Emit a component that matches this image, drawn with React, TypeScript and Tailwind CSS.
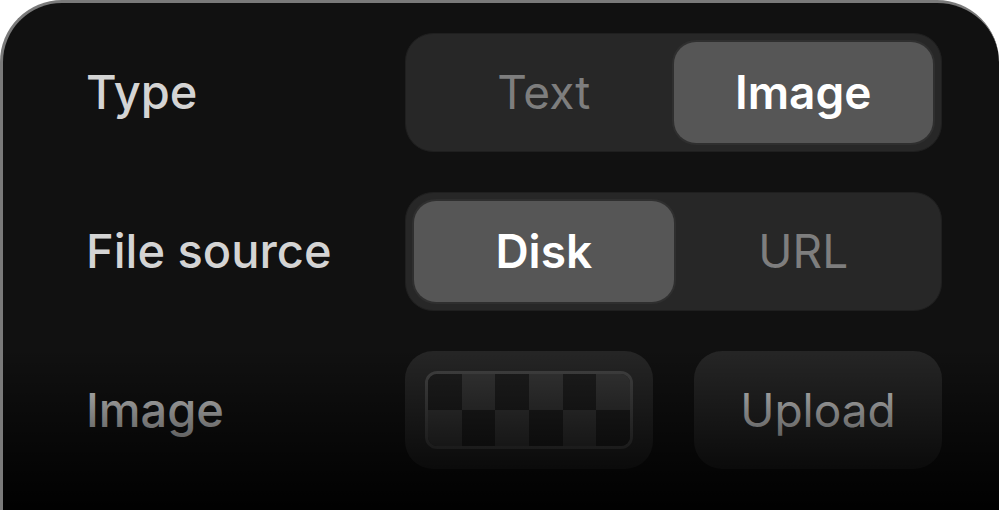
import { useState } from "react";

const font = { fontFamily: "Inter, 'Noto Sans', sans-serif" };

function Segmented({ options, value, onChange }: { options: string[]; value: string; onChange: (v: string) => void }) {
  return (
    <div className="grid grid-cols-2 h-[119px] w-[537px] p-2 rounded-[28px] bg-[#272727] border border-[#1f1f1f]">
      {options.map((o) => (
        <button
          key={o}
          onClick={() => onChange(o)}
          className={
            o === value
              ? "rounded-[22px] bg-[#565656] text-white font-semibold text-[46px] shadow-[0_0_0_2px_#2f2f2f]"
              : "rounded-[22px] text-[#7e7e7e] font-normal text-[46px]"
          }
        >
          {o}
        </button>
      ))}
    </div>
  );
}

export default function App() {
  const [type, setType] = useState("Image");
  const [source, setSource] = useState("Disk");

  return (
    <div className="w-[999px] h-[510px] bg-white overflow-hidden" style={font}>
      <div className="relative h-[560px] rounded-t-[62px] bg-[#111111] border-t-[3px] border-l-[3px] border-[#7a7a7a] overflow-hidden">
        <div className="flex flex-col gap-[40px] pt-[30px] pl-[83px] pr-[57px]">
          <div className="flex items-center justify-between">
            <span className="text-[47px] font-medium text-[#d4d4d4]">Type</span>
            <Segmented options={["Text", "Image"]} value={type} onChange={setType} />
          </div>
          <div className="flex items-center justify-between">
            <span className="text-[47px] font-medium text-[#d4d4d4]">File source</span>
            <Segmented options={["Disk", "URL"]} value={source} onChange={setSource} />
          </div>
          <div className="flex items-center justify-between">
            <span className="text-[47px] font-medium text-[#d4d4d4]">Image</span>
            <div className="flex gap-[41px]">
              <div className="w-[248px] h-[118px] rounded-[28px] bg-[#262626] p-[20px]">
                <div className="grid grid-cols-6 grid-rows-2 h-full rounded-[12px] border-[3px] border-[#444444] overflow-hidden">
                  {[0, 1, 0, 1, 0, 1, 1, 0, 1, 0, 1, 0].map((c, i) => (
                    <div key={i} className={c ? "bg-[#363636]" : "bg-[#1e1e1e]"} />
                  ))}
                </div>
              </div>
              <button className="w-[248px] h-[118px] rounded-[28px] bg-[#262626] text-[46px] text-[#d0d0d0]">
                Upload
              </button>
            </div>
          </div>
        </div>
        <div className="pointer-events-none absolute inset-0 bg-gradient-to-b from-transparent from-[62%] to-black to-[92%]" />
      </div>
    </div>
  );
}
